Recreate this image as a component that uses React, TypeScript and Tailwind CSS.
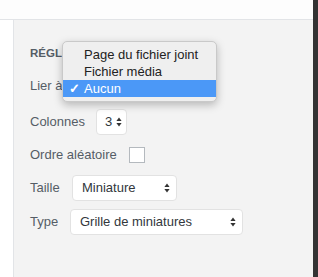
import React from 'react'

const font = { fontFamily: '"Liberation Sans", Arial, sans-serif' }

function Arrows() {
  return (
    <svg width="6" height="10" viewBox="0 0 6 10" className="shrink-0">
      <path d="M3 0.5 L5.6 4 H0.4 Z" fill="#333" />
      <path d="M3 9.5 L5.6 6 H0.4 Z" fill="#333" />
    </svg>
  )
}

function Select({ value, width, focus, pad }: { value: string; width: string; focus?: boolean; pad?: string }) {
  return (
    <div
      className={`flex h-[26px] items-center justify-between rounded-[4px] border bg-white text-[13px] text-[#32373c] ${pad ?? 'pl-[9px] pr-[6px]'} ${width} ${
        focus ? 'border-[#5b9dd9] shadow-[0_0_2px_rgba(30,140,190,0.8)]' : 'border-[#e2e2e2]'
      }`}
    >
      <span>{value}</span>
      <Arrows />
    </div>
  )
}

function Row({ label, labelW, children, className }: { label: string; labelW: string; children: React.ReactNode; className?: string }) {
  return (
    <div className={`flex h-[26px] items-center ${className ?? ''}`}>
      <span className={`shrink-0 text-[13px] text-[#555d66] ${labelW}`}>{label}</span>
      {children}
    </div>
  )
}

export default function App() {
  return (
    <div className="flex h-[277px] w-[318px] overflow-hidden bg-white" style={font}>
      <div className="flex flex-1 flex-col">
        <div className="h-[20px] shrink-0 border-b border-[#e2e4e7] bg-[#fdfdfd]" />
        <div className="flex flex-1">
          <div className="w-[14px] shrink-0 border-r border-[#e2e4e7] bg-white" />
          <div className="relative flex-1 bg-[#f3f3f3] pl-[16px]">
            <div className="mt-[25px] h-[16px] text-[11.5px] font-bold leading-[16px] text-[#555d66]">
              RÉGLAGES DE LA GALERIE
            </div>
            <Row label="Lier à" labelW="w-[43px]" className="mt-[12px]">
              <Select value="Aucun" width="w-[135px]" focus />
            </Row>
            <Row label="Colonnes" labelW="w-[66px]" className="mt-[10px]">
              <Select value="3" width="w-[31px]" pad="pl-[8px] pr-[4px]" />
            </Row>
            <Row label="Ordre aléatoire" labelW="w-[99px]" className="mt-[7px]">
              <div className="h-[16px] w-[16px] border border-[#b4b9be] bg-white" />
            </Row>
            <Row label="Taille" labelW="w-[42px]" className="mt-[7px]">
              <Select value="Miniature" width="w-[105px]" />
            </Row>
            <Row label="Type" labelW="w-[40px]" className="mt-[8px]">
              <Select value="Grille de miniatures" width="w-[173px]" />
            </Row>

            <div className="absolute left-[48px] top-[21px] w-[155px] rounded-[5px] border border-[#c9c9c9] bg-[#efefef] py-[4px] text-[13px] text-[#222] shadow-[0_3px_8px_rgba(0,0,0,0.25)]">
              <div className="flex h-[17px] items-center pl-[21px]">Page du fichier joint</div>
              <div className="flex h-[17px] items-center pl-[21px]">Fichier média</div>
              <div className="relative flex h-[17px] items-center bg-[#4b98f7] pl-[21px] text-white">
                <span className="absolute left-[6px] text-[13px] font-bold">✓</span>
                Aucun
              </div>
            </div>
          </div>
        </div>
      </div>
      <div className="w-[5px] shrink-0 bg-[#333333]" />
    </div>
  )
}
